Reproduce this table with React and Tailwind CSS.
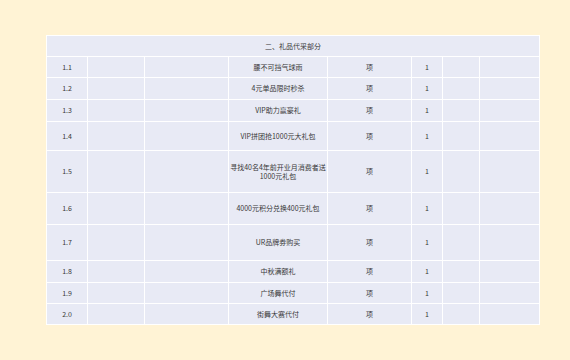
import React from 'react';

const rows = [
  { no: '1.1', name: '腰不可挡气球雨', h: 'h-[21px]' },
  { no: '1.2', name: '4元单品限时秒杀', h: 'h-[22px]' },
  { no: '1.3', name: 'VIP助力赢豪礼', h: 'h-[22px]' },
  { no: '1.4', name: 'VIP拼团抢1000元大礼包', h: 'h-[29px]' },
  { no: '1.5', name: '寻找40名4年前开业月消费者送1000元礼包', h: 'h-[42px]' },
  { no: '1.6', name: '4000元积分兑换400元礼包', h: 'h-[32px]' },
  { no: '1.7', name: 'UR品牌券购买', h: 'h-[36px]' },
  { no: '1.8', name: '中秋满额礼', h: 'h-[22px]' },
  { no: '1.9', name: '广场舞代付', h: 'h-[21px]' },
  { no: '2.0', name: '街舞大赛代付', h: 'h-[21px]' },
];

const cell = 'border border-white p-0 text-center align-middle';

export default function App() {
  return (
    <div
      className="w-[570px] h-[360px] bg-[#fff3d5] pt-[35px] pl-[46px]"
      style={{ fontFamily: '"Noto Sans CJK SC", "Noto Sans", sans-serif' }}
    >
      <table className="table-fixed border-collapse bg-[#e8eaf5] text-[7px] leading-[9px] text-[#383838] w-[493px]">
        <colgroup>
          <col className="w-[41px]" />
          <col className="w-[57px]" />
          <col className="w-[84px]" />
          <col className="w-[99px]" />
          <col className="w-[84px]" />
          <col className="w-[31px]" />
          <col className="w-[37px]" />
          <col className="w-[60px]" />
        </colgroup>
        <tbody>
          <tr className="h-[21px]">
            <td colSpan={8} className={cell}>二、礼品代采部分</td>
          </tr>
          {rows.map((r) => (
            <tr key={r.no} className={r.h}>
              <td className={cell}>{r.no}</td>
              <td className={cell}></td>
              <td className={cell}></td>
              <td className={cell}>{r.name}</td>
              <td className={cell}>项</td>
              <td className={cell}>1</td>
              <td className={cell}></td>
              <td className={cell}></td>
            </tr>
          ))}
        </tbody>
      </table>
    </div>
  );
}
